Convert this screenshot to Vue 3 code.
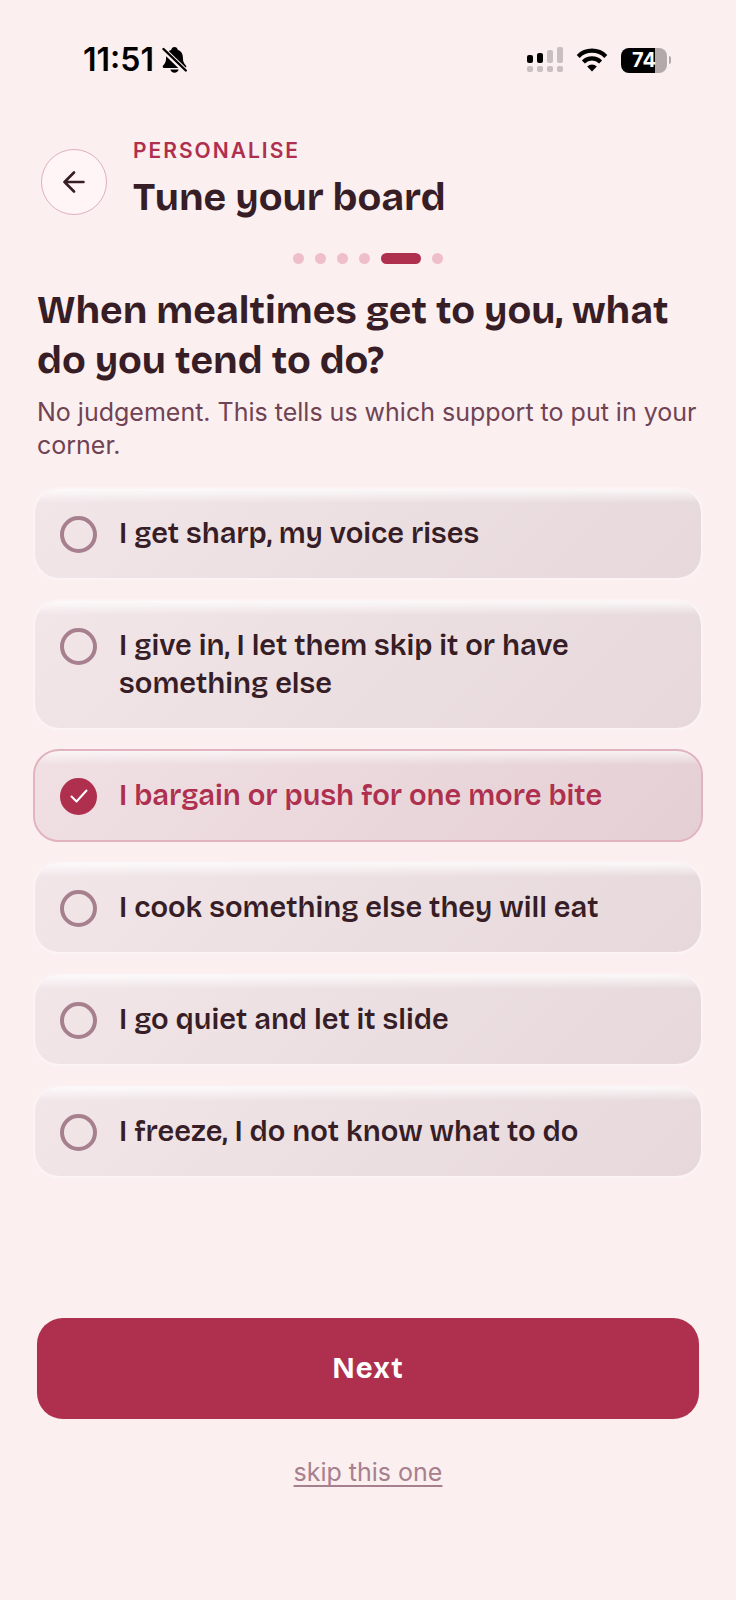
<template>
  <div class="screen">
    <header class="status">
      <div class="status-side">
        <span class="time">11:51</span>
        <svg class="bell" width="25" height="28" viewBox="0 0 25 28">
          <path d="M12.500 1c-1.800 0-3 1.200-3.200 2.700C5.700 5 4.100 8 4.100 11.500c0 4-1 6.200-3 8.100-.9.900-.4 2.400.9 2.400h21c1.300 0 1.800-1.500.9-2.400-2-1.900-3-4.100-3-8.100 0-3.500-1.600-6.500-5.200-7.800C15.500 2.200 14.300 1 12.500 1z" fill="#000" />
          <path d="M8.300 23.600h8.400c-.5 2-2.100 3.200-4.200 3.200s-3.700-1.200-4.200-3.200z" fill="#000" />
          <path d="M-1 1.500L26 27.500" stroke="#fcefef" stroke-width="5.600" />
          <path d="M1.500 3L23.800 24.500" stroke="#000" stroke-width="2.400" stroke-linecap="round" />
        </svg>
      </div>
      <div class="status-side status-right">
        <svg width="36" height="26" viewBox="0 0 36 26">
          <rect x="0" y="8" width="6" height="8" rx="2" fill="#000" />
          <rect x="10" y="6" width="6" height="10" rx="2" fill="#000" />
          <rect x="20" y="3" width="6" height="13" rx="2" fill="#c9bfc0" />
          <rect x="30" y="0" width="6" height="16" rx="2" fill="#c9bfc0" />
          <rect v-for="x in [0, 10, 20, 30]" :key="x" :x="x" y="19" width="6" height="6" rx="2" fill="#c9bfc0" />
        </svg>
        <svg width="32" height="24" viewBox="0 0 32 24">
          <path d="M2.200 8.400a19.500 19.500 0 0 1 27.600 0" fill="none" stroke="#000" stroke-width="4.200" />
          <path d="M7.400 14a12.200 12.200 0 0 1 17.200 0" fill="none" stroke="#000" stroke-width="4.200" />
          <path d="M16 23.500l-4.800-4.900a6.800 6.800 0 0 1 9.600 0z" fill="#000" />
        </svg>
        <div class="battery">
          <span class="battery-body">74</span>
          <span class="battery-cap"></span>
        </div>
      </div>
    </header>

    <div class="top">
      <button class="back" type="button" aria-label="Back">
        <svg width="22" height="22" viewBox="0 0 22 22" fill="none" stroke="#371d26" stroke-width="2.600" stroke-linecap="round" stroke-linejoin="round"><path d="M20.500 11H1.500M11 1.500L1.500 11l9.500 9.500" /></svg>
      </button>
      <div class="top-text">
        <p class="eyebrow">PERSONALISE</p>
        <h1 class="title">Tune your board</h1>
      </div>
    </div>

    <div class="dots">
      <span v-for="n in 6" :key="n" class="dot" :class="{ active: n === step }"></span>
    </div>

    <main class="content">
      <h2 class="question">When mealtimes get to you, what do you tend to do?</h2>
      <p class="hint">No judgement. This tells us which support to put in your corner.</p>

      <div class="options" role="radiogroup">
        <label v-for="(o, i) in options" :key="i" class="option" :class="{ selected: picked === i }">
          <span class="mark">
            <input v-model="picked" class="radio" type="radio" name="reaction" :value="i" />
            <svg v-if="picked === i" class="tick" width="18" height="14" viewBox="0 0 18 14" fill="none" stroke="#fff" stroke-width="2" stroke-linecap="round" stroke-linejoin="round"><path d="M1.500 7.500L6.500 12.500L16.500 1.500" /></svg>
          </span>
          <span class="option-text">{{ o }}</span>
        </label>
      </div>
    </main>

    <footer class="footer">
      <button class="next" type="button">Next</button>
      <a class="skip" href="#">skip this one</a>
    </footer>
  </div>
</template>

<script setup>
import { ref } from 'vue'

const step = 5
const picked = ref(2)

const options = [
  'I get sharp, my voice rises',
  'I give in, I let them skip it or have something else',
  'I bargain or push for one more bite',
  'I cook something else they will eat',
  'I go quiet and let it slide',
  'I freeze, I do not know what to do',
]
</script>

<style>
body { margin: 0; background: #fcefef; }
</style>

<style scoped>
.screen { --display: "Bricolage Grotesque", "Inter", sans-serif; --ink: #371d26; --berry: #ae304e; box-sizing: border-box; min-height: 100vh; padding: 44px 33px 113px; display: flex; flex-direction: column; background: #fcefef; font-family: "Inter", sans-serif; color: var(--ink); }

.status { display: flex; align-items: center; justify-content: space-between; height: 32px; padding: 0 32px 0 50px; }
.status-side { display: flex; align-items: center; gap: 8px; }
.status-right { gap: 13px; }
.time { font-size: 32px; line-height: 32px; font-weight: 600; color: #000; }
.battery { display: flex; align-items: center; gap: 2px; }
.battery-body { width: 46px; height: 25px; border-radius: 8px; background: linear-gradient(90deg, #000 75%, #b3a9aa 75%); color: #fff; font-size: 20px; line-height: 25px; font-weight: 700; text-align: center; }
.battery-cap { width: 2px; height: 8px; border-radius: 0 2px 2px 0; background: #b3a9aa; }

.top { display: flex; align-items: center; gap: 26px; margin-top: 61px; padding-left: 8px; }
.back { width: 66px; height: 66px; padding: 0; border: 1px solid #dfb0bd; border-radius: 50%; background: #fff5f7; display: flex; align-items: center; justify-content: center; flex-shrink: 0; cursor: pointer; margin-top: 3px; }
.eyebrow { margin: 0; font-size: 21px; line-height: 28px; font-weight: 600; letter-spacing: 2px; color: var(--berry); }
.title { margin: 8px 0 0; font-family: var(--display); font-size: 39px; line-height: 50px; font-weight: 700; }

.dots { display: flex; justify-content: center; gap: 11px; margin-top: 30px; }
.dot { width: 11px; height: 11px; border-radius: 6px; background: #eebfcb; }
.dot.active { width: 40px; background: var(--berry); }

.content { margin-top: 22px; }
.question { margin: 0; padding: 0 4px; font-family: var(--display); font-size: 39px; line-height: 50px; font-weight: 700; }
.hint { margin: 10px 0 0; padding: 0 4px; font-size: 25px; line-height: 33px; color: #704354; }

.options { display: flex; flex-direction: column; gap: 19px; margin-top: 25px; }
.option { display: flex; align-items: flex-start; gap: 22px; padding: 26px 25px 25px; border: 2px solid #fcf3f4; border-radius: 26px; background: linear-gradient(rgba(255, 255, 255, 0.8), rgba(255, 255, 255, 0) 14px) padding-box, linear-gradient(135deg, #f2e6e9, #e6d8db) padding-box; cursor: pointer; }
.option.selected { border-color: #e0b3bf; background: linear-gradient(rgba(255, 255, 255, 0.7), rgba(255, 255, 255, 0) 14px) padding-box, linear-gradient(135deg, #f0e0e4, #e4cfd4) padding-box; }
.mark { display: grid; place-items: center; height: 38px; flex-shrink: 0; }
.mark > * { grid-area: 1 / 1; }
.radio { appearance: none; box-sizing: border-box; width: 37px; height: 37px; margin: 0; border: 4px solid #a6808e; border-radius: 50%; }
.radio:checked { border-color: var(--berry); background: var(--berry); }
.tick { pointer-events: none; }
.option-text { font-family: var(--display); font-size: 29px; line-height: 38px; font-weight: 600; }
.selected .option-text { color: var(--berry); }

.footer { display: flex; flex-direction: column; align-items: center; margin-top: auto; padding: 40px 4px 0; }
.next { width: 100%; height: 101px; border: 0; border-radius: 26px; background: var(--berry); color: #fff; font-family: var(--display); font-size: 29px; font-weight: 700; letter-spacing: 1px; cursor: pointer; }
.skip { margin-top: 38px; font-size: 25px; line-height: 30px; color: #a6808e; text-decoration: underline; text-decoration-thickness: 2px; text-decoration-skip-ink: none; text-underline-offset: 4px; }
</style>
